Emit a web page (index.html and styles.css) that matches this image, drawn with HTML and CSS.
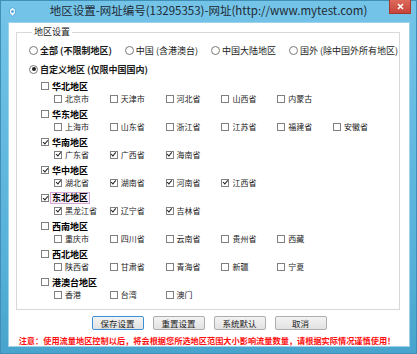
FILE: index.html
```html
<!DOCTYPE html>
<html lang="zh-CN">
<head>
    <meta charset="UTF-8">
    <title>地区设置</title>
    <link rel="stylesheet" href="styles.css">
</head>
<body>
<div class="window">
    <div class="titlebar">
        <div class="app-icon">
            <svg width="7" height="10" viewBox="0 0 7 10">
                <path d="M3.5 0.5 L6.5 2.5 L6.5 6 L3.5 9.5 L0.5 6 L0.5 2.5 Z" fill="#e8f6ff" stroke="#4a9fd0" stroke-width="0.8"/>
                <circle cx="3.5" cy="4.5" r="1.3" fill="#3f97d6"/>
            </svg>
        </div>
        <div class="title">地区设置-网址编号(13295353)-网址(http://www.mytest.com)</div>
        <div class="close-btn">
            <svg width="7" height="7" viewBox="0 0 7 7"><path d="M1 1 L6 6 M6 1 L1 6" stroke="#fff" stroke-width="1.6"/></svg>
        </div>
    </div>
    <div class="client">
        <fieldset class="group">
            <legend>地区设置</legend>
            <div class="radio-row">
                <label class="radio-item bold"><span class="rb"></span>全部 (不限制地区)</label>
                <label class="radio-item"><span class="rb"></span>中国 (含港澳台)</label>
                <label class="radio-item"><span class="rb"></span>中国大陆地区</label>
                <label class="radio-item"><span class="rb"></span>国外 (除中国外所有地区)</label>
            </div>
            <div class="radio-row custom">
                <label class="radio-item bold"><span class="rb on"></span>自定义地区 (仅限中国国内)</label>
            </div>

            <div class="region">
                <div class="region-head"><span class="cb"></span><span>华北地区</span></div>
                <div class="region-items">
                    <label class="item"><span class="cb"></span>北京市</label>
                    <label class="item"><span class="cb"></span>天津市</label>
                    <label class="item"><span class="cb"></span>河北省</label>
                    <label class="item"><span class="cb"></span>山西省</label>
                    <label class="item"><span class="cb"></span>内蒙古</label>
                </div>
            </div>
            <div class="region">
                <div class="region-head"><span class="cb"></span><span>华东地区</span></div>
                <div class="region-items">
                    <label class="item"><span class="cb"></span>上海市</label>
                    <label class="item"><span class="cb"></span>山东省</label>
                    <label class="item"><span class="cb"></span>浙江省</label>
                    <label class="item"><span class="cb"></span>江苏省</label>
                    <label class="item"><span class="cb"></span>福建省</label>
                    <label class="item"><span class="cb"></span>安徽省</label>
                </div>
            </div>
            <div class="region">
                <div class="region-head"><span class="cb on"></span><span>华南地区</span></div>
                <div class="region-items">
                    <label class="item"><span class="cb on"></span>广东省</label>
                    <label class="item"><span class="cb on"></span>广西省</label>
                    <label class="item"><span class="cb on"></span>海南省</label>
                </div>
            </div>
            <div class="region">
                <div class="region-head"><span class="cb on"></span><span>华中地区</span></div>
                <div class="region-items">
                    <label class="item"><span class="cb on"></span>湖北省</label>
                    <label class="item"><span class="cb on"></span>湖南省</label>
                    <label class="item"><span class="cb on"></span>河南省</label>
                    <label class="item"><span class="cb on"></span>江西省</label>
                </div>
            </div>
            <div class="region">
                <div class="region-head"><span class="cb on"></span><span class="focus">东北地区</span></div>
                <div class="region-items">
                    <label class="item"><span class="cb on"></span>黑龙江省</label>
                    <label class="item"><span class="cb on"></span>辽宁省</label>
                    <label class="item"><span class="cb on"></span>吉林省</label>
                </div>
            </div>
            <div class="region">
                <div class="region-head"><span class="cb"></span><span>西南地区</span></div>
                <div class="region-items">
                    <label class="item"><span class="cb"></span>重庆市</label>
                    <label class="item"><span class="cb"></span>四川省</label>
                    <label class="item"><span class="cb"></span>云南省</label>
                    <label class="item"><span class="cb"></span>贵州省</label>
                    <label class="item"><span class="cb"></span>西藏</label>
                </div>
            </div>
            <div class="region">
                <div class="region-head"><span class="cb"></span><span>西北地区</span></div>
                <div class="region-items">
                    <label class="item"><span class="cb"></span>陕西省</label>
                    <label class="item"><span class="cb"></span>甘肃省</label>
                    <label class="item"><span class="cb"></span>青海省</label>
                    <label class="item"><span class="cb"></span>新疆</label>
                    <label class="item"><span class="cb"></span>宁夏</label>
                </div>
            </div>
            <div class="region">
                <div class="region-head"><span class="cb"></span><span>港澳台地区</span></div>
                <div class="region-items">
                    <label class="item"><span class="cb"></span>香港</label>
                    <label class="item"><span class="cb"></span>台湾</label>
                    <label class="item"><span class="cb"></span>澳门</label>
                </div>
            </div>
        </fieldset>

        <div class="buttons">
            <button class="btn default">保存设置</button>
            <button class="btn">重置设置</button>
            <button class="btn">系统默认</button>
            <button class="btn">取消</button>
        </div>
        <div class="notice">注意：使用流量地区控制以后，将会根据您所选地区范围大小影响流量数量，请根据实际情况谨慎使用！</div>
    </div>
</div>
</body>
</html>
```

FILE: styles.css
```css
body {
    margin: 0;
    background: #62b6dc;
    font-family: "Noto Sans CJK SC", "DejaVu Sans", sans-serif;
    color: #1a1a1a;
}

.window {
    width: 417px;
    height: 354px;
    box-sizing: border-box;
    display: flex;
    flex-direction: column;
    background: linear-gradient(180deg, #74c4e8 0%, #63b9e0 40%, #56b0d8 75%, #48a4cc 100%);
    border: 1px solid #3f8fb6;
}

.titlebar {
    height: 21px;
    display: grid;
    grid-template-columns: 29px 1fr 29px;
    align-items: start;
}

.app-icon {
    padding: 6px 0 0 8px;
    line-height: 0;
}

.title {
    font-size: 11.5px;
    line-height: 21px;
    text-align: center;
    color: #1e2a33;
    white-space: nowrap;
    margin-top: -1px;
}

.close-btn {
    width: 20px;
    height: 13px;
    margin: -1px 0 0 2px;
    background: linear-gradient(180deg, #de6a5c, #c7453a);
    border: 1px solid #a33a30;
    border-top: 0;
    display: flex;
    align-items: center;
    justify-content: center;
}

.client {
    flex: 1;
    margin: 0 6px 6px 7px;
    background: #fff;
    border: 1px solid #9fd2ea;
    display: flex;
    flex-direction: column;
    overflow: hidden;
}

.group {
    margin: 3px 9px 0 7px;
    padding: 6px 0 5px 12px;
    border: 1px solid #d8d8d8;
    min-width: 0;
}

.group legend {
    font-size: 9px;
    line-height: 12px;
    padding: 0 2px;
    margin-left: 3px;
}

.radio-row {
    display: flex;
    gap: 13px;
    height: 12px;
    align-items: center;
}

.radio-row.custom {
    margin-top: 7px;
    margin-bottom: 5px;
}

.radio-item {
    display: flex;
    align-items: center;
    font-size: 9px;
    white-space: nowrap;
}

.bold {
    font-weight: bold;
}

.rb {
    position: relative;
    width: 7px;
    height: 7px;
    border: 1px solid #7a7a7a;
    border-radius: 50%;
    margin-right: 2px;
    background: #fff;
}

.rb.on::after {
    content: '';
    position: absolute;
    left: 1.5px;
    top: 1.5px;
    width: 4px;
    height: 4px;
    border-radius: 50%;
    background: #222;
}

.region {
    margin-bottom: 3px;
}

.region-head {
    height: 12px;
    display: flex;
    align-items: center;
    padding-left: 12px;
    font-size: 9px;
    font-weight: bold;
    color: #000;
}

.region-head .focus {
    border: 1px solid #d3a6d8;
    background: #fbf0fb;
    padding: 0 1px;
    margin-left: -2px;
    line-height: 10px;
}

.region-items {
    height: 13px;
    display: grid;
    grid-template-columns: repeat(6, 55.8px);
    align-items: center;
    padding-left: 25px;
}

.item {
    display: flex;
    align-items: center;
    font-size: 8px;
    white-space: nowrap;
}

.cb {
    position: relative;
    flex: none;
    width: 6px;
    height: 6px;
    border: 1px solid #808080;
    background: #fff;
    margin-right: 3px;
}

.cb.on::after {
    content: '';
    position: absolute;
    left: 1.5px;
    top: -0.5px;
    width: 1.5px;
    height: 4px;
    border-right: 1.4px solid #1a1a1a;
    border-bottom: 1.4px solid #1a1a1a;
    transform: rotate(40deg);
}

.buttons {
    display: flex;
    justify-content: center;
    gap: 9px;
    margin-top: 6px;
}

.btn {
    width: 52px;
    height: 14px;
    padding: 0;
    font-family: inherit;
    font-size: 8.5px;
    line-height: 12px;
    color: #1a1a1a;
    background: linear-gradient(180deg, #f3f3f3, #e2e2e2);
    border: 1px solid #adadad;
    border-radius: 2px;
}

.btn.default {
    border-color: #3c8fd6;
}

.notice {
    margin: 4px 4px 0 0;
    font-size: 8.2px;
    line-height: 12px;
    font-weight: bold;
    color: #ff1010;
    white-space: nowrap;
    text-align: center;
}
```
